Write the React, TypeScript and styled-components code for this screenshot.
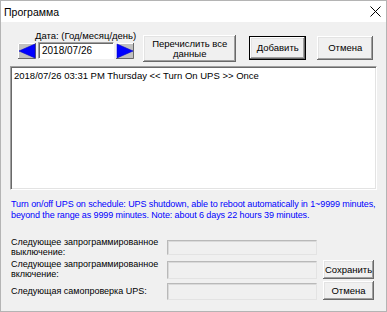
import React from "react";
import styled, { createGlobalStyle, css } from "styled-components";

const Global = createGlobalStyle`
  html, body { margin: 0; padding: 0; background: #ffffff; }
  body { font-family: "Liberation Sans", Arial, sans-serif; }
  * { box-sizing: border-box; }
`;

const Window = styled.div`
  width: 387px;
  height: 312px;
  border: 1px solid #b4b4b4;
  display: flex;
  flex-direction: column;
  background: #f0f0f0;
  overflow: hidden;
`;

const TitleBar = styled.div`
  height: 21px;
  flex: none;
  background: #ffffff;
  display: flex;
  align-items: center;
  justify-content: space-between;
  padding: 0 5px 0 3px;
  font-family: "Liberation Sans", Arial, sans-serif;
  font-size: 10.5px;
  color: #000;
`;

const Body = styled.div`
  flex: 1;
  display: flex;
  flex-direction: column;
  padding: 7px 9px 0 9px;
  font-size: 9px;
  color: #000;
`;

const TopRow = styled.div`
  height: 37px;
  display: flex;
  align-items: flex-start;
`;

const DateGroup = styled.div`
  margin-left: 8px;
  display: flex;
  flex-direction: column;
`;

const DateLabel = styled.div`
  padding-left: 17px;
  line-height: 13px;
  height: 13px;
  font-size: 9.5px;
`;

const DateControls = styled.div`
  display: flex;
  align-items: center;
  gap: 2px;
`;

const DateInput = styled.div`
  width: 76px;
  height: 17px;
  background: #fff;
  border: 1px solid;
  border-color: #a0a0a0 #ffffff #ffffff #a0a0a0;
  box-shadow: inset 1px 1px 0 #696969;
  padding: 2px 0 0 3px;
  font-size: 10px;
  line-height: 12px;
`;

const bevel = css`
  background: #f0f0f0;
  box-shadow: inset -1px -1px 0 #696969, inset 1px 1px 0 #ffffff,
    inset -2px -2px 0 #a0a0a0, inset 2px 2px 0 #e3e3e3;
`;

const Button = styled.div<{ $w: number; $h: number; $default?: boolean }>`
  ${bevel};
  width: ${(p) => p.$w}px;
  height: ${(p) => p.$h}px;
  display: flex;
  align-items: center;
  justify-content: center;
  text-align: center;
  font-size: 9.5px;
  line-height: 10px;
  flex: none;
  ${(p) =>
    p.$default &&
    css`
      border: 1px solid #000;
    `}
`;

const TopButtons = styled.div`
  margin-left: 7px;
  margin-top: 6px;
  display: flex;
  align-items: flex-start;
`;

const ButtonSlot = styled.div<{ $ml: number; $mt: number }>`
  margin-left: ${(p) => p.$ml}px;
  margin-top: ${(p) => p.$mt}px;
`;

const ListBox = styled.div`
  height: 124px;
  flex: none;
  background: #ffffff;
  border: 1px solid;
  border-color: #a0a0a0 #ffffff #ffffff #a0a0a0;
  box-shadow: inset 1px 1px 0 #696969, inset -1px -1px 0 #e3e3e3;
  padding: 3px 3px;
  font-size: 9.5px;
  line-height: 11px;
`;

const InfoText = styled.div`
  margin-top: 9px;
  color: #0000ff;
  font-size: 9px;
  letter-spacing: -0.1px;
  line-height: 10.5px;
  padding-left: 1px;
  white-space: nowrap;
`;

const StatusGrid = styled.div`
  margin-top: 17px;
  display: grid;
  grid-template-columns: 151px 150px 51px;
  grid-template-rows: 22px 22px 20px;
  column-gap: 6px;
  align-items: start;
`;

const StatusLabel = styled.div<{ $row: number; $center?: boolean }>`
  grid-column: 1;
  grid-row: ${(p) => p.$row};
  padding-left: 1px;
  line-height: 10px;
  font-size: 9px;
  white-space: nowrap;
  align-self: ${(p) => (p.$center ? "center" : "start")};
`;

const StatusField = styled.div<{ $row: number; $h: number; $mt: number }>`
  grid-column: 2;
  grid-row: ${(p) => p.$row};
  margin-top: ${(p) => p.$mt}px;
  height: ${(p) => p.$h}px;
  background: #f0f0f0;
  border: 1px solid;
  border-color: #b9b9b9 #e3e3e3 #e3e3e3 #b9b9b9;
  box-shadow: inset 1px 1px 0 #dadada;
`;

const ButtonCell = styled.div<{ $row: number; $mt: number }>`
  grid-column: 3;
  grid-row: ${(p) => p.$row};
  margin-top: ${(p) => p.$mt}px;
`;

const CloseIcon = () => (
  <svg width="11" height="11" viewBox="0 0 11 11">
    <path d="M0.5 0.5 L10.5 10.5 M10.5 0.5 L0.5 10.5" stroke="#000" strokeWidth="1" />
  </svg>
);

const ArrowButton = ({ dir }: { dir: "left" | "right" }) => (
  <svg width="18" height="16" viewBox="0 0 18 16">
    <rect x="0" y="0" width="18" height="16" fill="#c0c0c0" />
    <path d="M0 15.5 H17.5 V0" stroke="#696969" fill="none" />
    <path d="M0.5 15 V0.5 H17" stroke="#ffffff" fill="none" />
    {dir === "left" ? (
      <polygon points="1,8 17,1 17,15" fill="#0000ff" stroke="#0000c8" strokeWidth="0.6" />
    ) : (
      <polygon points="17,8 1,1 1,15" fill="#0000ff" stroke="#0000c8" strokeWidth="0.6" />
    )}
  </svg>
);

export default function App() {
  return (
    <>
      <Global />
      <Window>
        <TitleBar>
          <span>Программа</span>
          <CloseIcon />
        </TitleBar>
        <Body>
          <TopRow>
            <DateGroup>
              <DateLabel>Дата: (Год/месяц/день)</DateLabel>
              <DateControls>
                <ArrowButton dir="left" />
                <DateInput>2018/07/26</DateInput>
                <ArrowButton dir="right" />
              </DateControls>
            </DateGroup>
            <TopButtons>
              <Button $w={93} $h={27}>
                Перечислить все
                <br />
                данные
              </Button>
              <ButtonSlot $ml={13} $mt={1}>
                <Button $w={57} $h={24} $default>
                  Добавить
                </Button>
              </ButtonSlot>
              <ButtonSlot $ml={11} $mt={1}>
                <Button $w={56} $h={24}>
                  Отмена
                </Button>
              </ButtonSlot>
            </TopButtons>
          </TopRow>
          <ListBox>2018/07/26 03:31 PM Thursday &lt;&lt; Turn On UPS &gt;&gt; Once</ListBox>
          <InfoText>
            Turn on/off UPS on schedule: UPS shutdown, able to reboot automatically in 1~9999 minutes,
            <br />
            beyond the range as 9999 minutes. Note: about 6 days 22 hours 39 minutes.
          </InfoText>
          <StatusGrid>
            <StatusLabel $row={1}>
              Следующее запрограммированное
              <br />
              выключение:
            </StatusLabel>
            <StatusField $row={1} $h={15} $mt={3} />
            <StatusLabel $row={2}>
              Следующее запрограммированное
              <br />
              включение:
            </StatusLabel>
            <StatusField $row={2} $h={18} $mt={2} />
            <ButtonCell $row={2} $mt={1}>
              <Button $w={51} $h={19}>
                Сохранить
              </Button>
            </ButtonCell>
            <StatusLabel $row={3} $center>
              Следующая самопроверка UPS:
            </StatusLabel>
            <StatusField $row={3} $h={17} $mt={2} />
            <ButtonCell $row={3} $mt={0}>
              <Button $w={51} $h={19}>
                Отмена
              </Button>
            </ButtonCell>
          </StatusGrid>
        </Body>
      </Window>
    </>
  );
}
